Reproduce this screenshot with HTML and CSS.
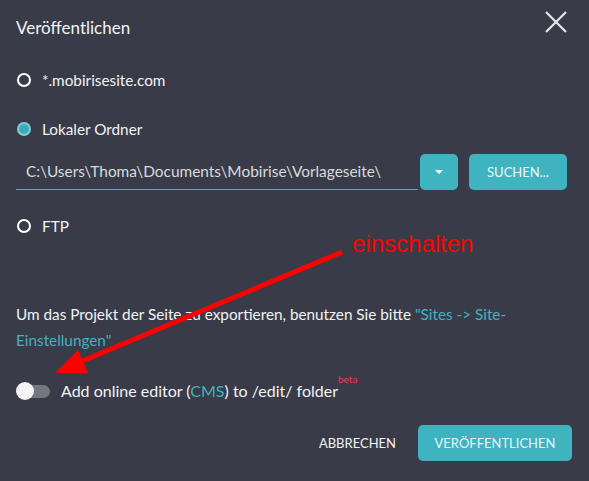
FILE: index.html
```html
<!DOCTYPE html>
<html>
	<head>
		<meta charset="UTF-8">
		<title>Veröffentlichen</title>
		<link rel="stylesheet" href="styles.css">
	</head>
	<body>
		<div class="dialog">
			<div class="head">
				<h1 class="title">Veröffentlichen</h1>
				<span class="close">
					<svg width="22" height="22" viewBox="0 0 22 22"><path d="M1 1L21 21M21 1L1 21" stroke="#e6e7ea" stroke-width="2.2" fill="none"/></svg>
				</span>
			</div>

			<label class="option first"><span class="radio"></span>*.mobirisesite.com</label>
			<label class="option second"><span class="radio checked"></span>Lokaler Ordner</label>

			<div class="pathrow">
				<div class="path">C:\Users\Thoma\Documents\Mobirise\Vorlageseite\</div>
				<span class="btn drop"><span class="caret"></span></span>
				<span class="btn search">SUCHEN...</span>
			</div>

			<label class="option ftp"><span class="radio"></span>FTP</label>

			<p class="note">Um das Projekt der Seite zu exportieren, benutzen Sie bitte <a href="#">"Sites -&gt; Site-<br>Einstellungen"</a></p>

			<div class="cms">
				<span class="toggle"><span class="knob"></span></span>
				<span>Add online editor (<a href="#">CMS</a>) to /edit/ folder<sup>beta</sup></span>
			</div>

			<div class="foot">
				<span class="cancel">ABBRECHEN</span>
				<span class="btn publish">VERÖFFENTLICHEN</span>
			</div>
		</div>

		<!-- annotation -->
		<div class="hint">einschalten</div>
		<svg class="arrow" width="589" height="481" viewBox="0 0 589 481">
			<line x1="342" y1="252" x2="80" y2="362" stroke="#ff0000" stroke-width="5"/>
			<polygon points="55,373 78,350 88,373" fill="#ff0000"/>
		</svg>
	</body>
</html>
```

FILE: styles.css
```css
*{margin:0;padding:0;box-sizing:border-box;}
html,body{height:100%;}
body{
	background:#393c48;
	color:#f2f3f5;
	font-family:Lato,"Open Sans",sans-serif;
	overflow:hidden;
}
a{color:#43b2bd;text-decoration:none;}
.dialog{padding:0 22px 0 16px;}
.head{display:flex;justify-content:space-between;align-items:flex-start;height:54px;}
.title{font-size:17px;font-weight:normal;line-height:22px;margin-top:17px;}
.close{display:block;margin-top:11px;margin-right:0;}
.close svg{display:block;}

.option{display:flex;align-items:center;height:20px;font-size:15.3px;}
.option.first{margin-top:16px;}
.option.second{margin-top:29px;}
.option.ftp{margin-top:26px;}
.radio{
	width:14px;height:14px;
	border:2px solid #fff;
	border-radius:50%;
	margin:0 11px 0 1px;
	flex:none;
}
.radio.checked{
	border-color:#84cdd5;
	background:#39acb8;
}

.pathrow{display:flex;align-items:stretch;height:36px;margin-top:15px;}
.path{
	flex:1;
	border-bottom:1px solid #43b2bd;
	color:#d8dadf;
	font-size:15.4px;
	line-height:35px;
	padding-left:10px;
	margin-right:2px;
}
.btn{
	display:flex;align-items:center;justify-content:center;
	background:#3fb3bf;
	border-radius:5px;
	color:#eef9fa;
	font-size:13px;
}
.drop{width:38px;}
.caret{
	width:0;height:0;
	border-left:4px solid transparent;
	border-right:4px solid transparent;
	border-top:4px solid #fff;
}
.search{width:98px;margin-left:11px;}

.note{font-size:15.3px;line-height:26px;margin-top:65px;}

.cms{display:flex;align-items:center;height:20px;margin-top:28px;font-size:16px;}
.toggle{
	position:relative;
	width:34px;height:18px;
	margin-right:11px;
	flex:none;
}
.toggle:before{
	content:"";
	position:absolute;left:9px;top:3px;
	width:25px;height:13px;
	border-radius:7px;
	background:#75777e;
}
.knob{
	position:absolute;left:0;top:0;
	width:18px;height:18px;
	border-radius:50%;
	background:#f4f4f6;
}
sup{color:#e2404a;font-size:10px;position:relative;top:-8px;margin-left:0;}

.foot{display:flex;justify-content:flex-end;align-items:center;margin-top:24px;margin-right:-5px;}
.cancel{font-size:13px;margin-right:22px;}
.publish{width:154px;height:36px;color:#e5f6f8;}

.hint{
	position:absolute;left:352px;top:230px;
	font-family:"Liberation Sans",Arial,sans-serif;
	font-size:24px;
	color:#ff0000;
}
.arrow{position:absolute;left:0;top:0;}
```
